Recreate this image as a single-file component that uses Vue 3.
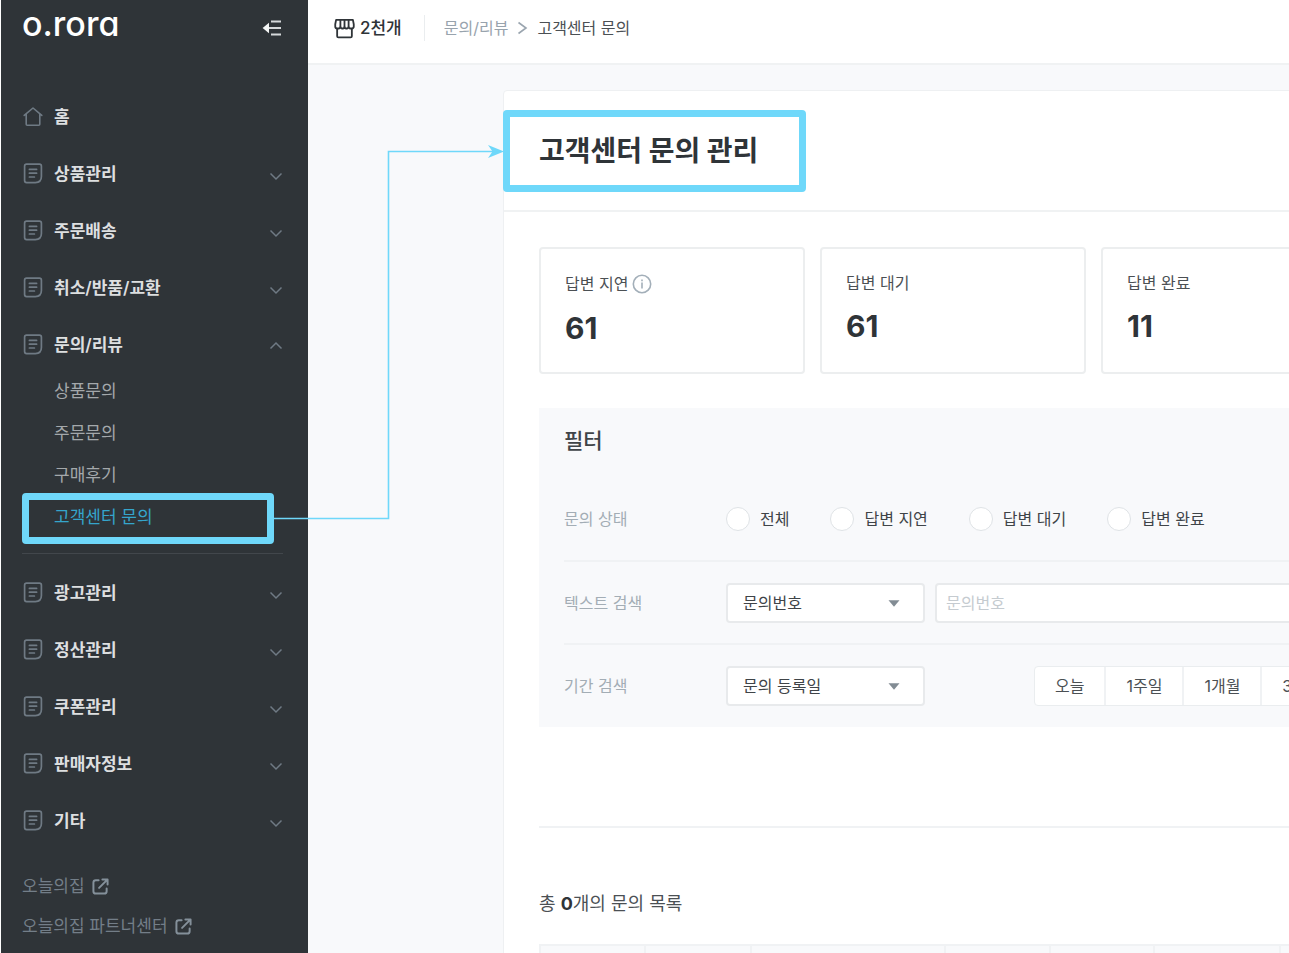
<template>
  <div class="shell">
    <aside class="sidebar">
      <div class="brand-row">
        <a href="#" class="brand">o.rora</a>
        <button type="button" class="collapse-btn" aria-label="메뉴 접기">
          <svg width="21" height="18" viewBox="0 0 21 18" fill="none" stroke="#d6d9db" stroke-width="2">
            <path d="M9 2.500h10M6 9h13M9 15.500h10" />
            <path d="M7 3.800v10.400L0.600 9z" fill="#f4f5f5" stroke="none" />
          </svg>
        </button>
      </div>

      <nav class="menu">
        <div v-for="group in menus" :key="group.label" class="group" :class="{ open: group.children }">
          <a v-if="group.home" href="#" class="group-btn">
            <svg class="group-icon" width="20" height="22" viewBox="0 0 20 22" fill="none" stroke="#6f7a84" stroke-width="1.600" stroke-linejoin="round" stroke-linecap="round">
              <path d="M1.200 9.400L10 2l8.800 7.400M3.200 8v10.200q0 1 1 1h11.600q1 0 1-1V8" />
            </svg>
            <span class="group-label">{{ group.label }}</span>
          </a>
          <button v-else type="button" class="group-btn" :aria-expanded="!!group.children">
            <svg class="group-icon" width="20" height="22" viewBox="0 0 20 22" fill="none" stroke="#6f7a84" stroke-width="1.700" stroke-linecap="round">
              <path d="M3.600 1.200h12.800q2 0 2 2v10.400q0 6-6 6H3.600q-2 0-2-2V3.200q0-2 2-2z" />
              <path d="M6.400 6.400h7.200M6.400 10.200h7.200M6.400 14h5" />
            </svg>
            <span class="group-label">{{ group.label }}</span>
            <svg class="chevron" :class="{ up: group.children }" width="14" height="9" viewBox="0 0 14 9" fill="none" stroke="#6f7a84" stroke-width="1.500">
              <path :d="group.children ? 'M1.500 7.500L7 2l5.500 5.500' : 'M1.500 1.500L7 7l5.500-5.500'" />
            </svg>
          </button>
          <ul v-if="group.children" class="sub-list">
            <li v-for="child in group.children" :key="child">
              <a href="#" :class="{ active: child === activeMenu }">{{ child }}</a>
            </li>
          </ul>
        </div>
      </nav>

      <div class="outer-links">
        <a v-for="link in outerLinks" :key="link" href="#">
          {{ link }}
          <svg width="17" height="17" viewBox="0 0 18 18" fill="none" stroke="#84909a" stroke-width="2.100" stroke-linecap="round" stroke-linejoin="round">
            <path d="M7 2.500H4q-2.500 0-2.500 2.500v9q0 2.500 2.500 2.500h9q2.500 0 2.500-2.500v-3M7.500 10.500L16 2M11 1.500h5.500V7" />
          </svg>
        </a>
      </div>
    </aside>

    <div class="content">
      <header class="topbar">
        <svg class="store-icon" width="21" height="21" viewBox="0 0 22 22" fill="none" stroke="#2f3438" stroke-width="1.900" stroke-linejoin="round">
          <path d="M2.200 2h17.600l.9 4.500V9q0 2-2 2h-1.400q-2 0-2-2 0 2-2 2h-.6q-1.700 0-1.700-2 0 2-1.700 2h-.6q-2 0-2-2 0 2-2 2H3.300q-2 0-2-2V6.500z" />
          <path d="M6.700 2v7M11 2v7M15.300 2v7M3.300 11v8q0 1.300 1.300 1.300h12.800q1.300 0 1.300-1.300v-8" />
        </svg>
        <strong class="store-name">2천개</strong>
        <span class="bar"></span>
        <nav class="crumbs">
          <a href="#">문의/리뷰</a>
          <svg width="11" height="14" viewBox="0 0 11 14" fill="none" stroke="#9aa5af" stroke-width="1.600">
            <path d="M1.500 1.500L9 7l-7.500 5.500" />
          </svg>
          <span>고객센터 문의</span>
        </nav>
      </header>

      <main class="main">
        <section class="panel">
          <div class="panel-head">
            <h1>고객센터 문의 관리</h1>
          </div>

          <div class="panel-body">
            <div class="stats">
              <div v-for="stat in stats" :key="stat.label" class="stat">
                <div class="stat-label">
                  {{ stat.label }}
                  <button v-if="stat.info" type="button" class="info-btn" aria-label="안내">
                    <svg width="20" height="20" viewBox="0 0 20 20" fill="none" stroke="#a3afb9" stroke-width="1.600">
                      <circle cx="10" cy="10" r="8.700" />
                      <path d="M10 8.500v6M10 5.500v1.700" />
                    </svg>
                  </button>
                </div>
                <div class="stat-value">{{ stat.value }}</div>
              </div>
            </div>

            <form class="filter" @submit.prevent>
              <h2>필터</h2>
              <div class="filter-row">
                <span id="status-label" class="filter-label">문의 상태</span>
                <div class="radios" role="radiogroup" aria-labelledby="status-label">
                  <label v-for="item in statuses" :key="item" class="radio">
                    <input v-model="status" type="radio" name="status" :value="item" />
                    <span>{{ item }}</span>
                  </label>
                </div>
              </div>
              <div class="filter-row">
                <label class="filter-label" for="text-type">텍스트 검색</label>
                <div class="select-box">
                  <select id="text-type">
                    <option>문의번호</option>
                  </select>
                  <svg width="12" height="7" viewBox="0 0 12 7" fill="#828c94">
                    <path d="M0.500 0.300h11L6 6.700z" />
                  </svg>
                </div>
                <input v-model="keyword" class="text-input" type="text" placeholder="문의번호" aria-label="검색어" />
              </div>
              <div class="filter-row">
                <label class="filter-label" for="date-type">기간 검색</label>
                <div class="select-box">
                  <select id="date-type">
                    <option>문의 등록일</option>
                  </select>
                  <svg width="12" height="7" viewBox="0 0 12 7" fill="#828c94">
                    <path d="M0.500 0.300h11L6 6.700z" />
                  </svg>
                </div>
                <div class="periods">
                  <button v-for="item in periods" :key="item" type="button">{{ item }}</button>
                </div>
              </div>
            </form>

            <div class="list">
              <p class="list-title">총 <b>0</b>개의 문의 목록</p>
              <table>
                <colgroup>
                  <col v-for="(width, index) in columns" :key="index" :style="{ width: width + 'px' }" />
                </colgroup>
                <thead>
                  <tr>
                    <th v-for="(width, index) in columns" :key="index"></th>
                  </tr>
                </thead>
              </table>
            </div>
          </div>
        </section>
      </main>
    </div>

    <svg class="connector" width="232" height="376" viewBox="0 0 232 376" fill="none">
      <path d="M0 373.500h114.500V6.500H224" stroke="#6fd8fa" stroke-width="1.600" />
      <path d="M230 6.500L214 0l4.500 6.500L214 13z" fill="#6fd8fa" />
    </svg>
  </div>
</template>

<script setup>
import { ref } from 'vue'

const activeMenu = ref('고객센터 문의')
const status = ref('')
const keyword = ref('')

const menus = [
  { label: '홈', home: true },
  { label: '상품관리' },
  { label: '주문배송' },
  { label: '취소/반품/교환' },
  { label: '문의/리뷰', children: ['상품문의', '주문문의', '구매후기', '고객센터 문의'] },
  { label: '광고관리' },
  { label: '정산관리' },
  { label: '쿠폰관리' },
  { label: '판매자정보' },
  { label: '기타' },
]

const outerLinks = ['오늘의집', '오늘의집 파트너센터']

const stats = [
  { label: '답변 지연', value: 61, info: true },
  { label: '답변 대기', value: 61 },
  { label: '답변 완료', value: 11 },
]

const statuses = ['전체', '답변 지연', '답변 대기', '답변 완료']
const periods = ['오늘', '1주일', '1개월', '3개월']
const columns = [105, 106, 194, 105, 104, 126, 369]
</script>

<style>
body {
  margin: 0;
  background: #fff;
}
</style>

<style scoped>
.shell {
  position: relative;
  display: flex;
  height: 100vh;
  overflow: hidden;
  font-family: Inter, 'Noto Sans CJK KR', sans-serif;
  font-size: 16px;
  line-height: 24px;
  color: #2f3438;
}

.shell * {
  box-sizing: border-box;
}

button,
input,
select {
  margin: 0;
  font: inherit;
  color: inherit;
}

button {
  padding: 0;
  border: none;
  background: none;
  cursor: pointer;
}

a {
  color: inherit;
  text-decoration: none;
}

.sidebar {
  flex: 0 0 307px;
  margin-left: 1px;
  padding: 0 25px 0 21px;
  background: #2f3438;
  font-size: 17px;
}

.brand-row {
  display: flex;
  justify-content: space-between;
  align-items: flex-start;
  height: 96px;
}

.brand {
  font-size: 34px;
  line-height: 48px;
  font-weight: 500;
  font-feature-settings: 'cv11';
  color: #fff;
}

.collapse-btn {
  display: flex;
  align-items: center;
  height: 56px;
}

.menu {
  display: flex;
  flex-direction: column;
  gap: 15px;
}

.group-btn {
  display: flex;
  align-items: center;
  width: 100%;
  height: 42px;
  text-align: left;
}

.group-icon {
  margin: 0 11px 0 1px;
}

.chevron {
  margin-top: 4px;
}

.chevron.up {
  margin-top: 0;
}

.group-label {
  flex: 1;
  font-weight: 600;
  color: #dddfe0;
}

.group.open {
  margin-bottom: 3px;
  padding-bottom: 15px;
  border-bottom: 1px solid #42474c;
}

.sub-list {
  margin: 4px 0 0;
  padding: 0;
  list-style: none;
}

.sub-list a {
  position: relative;
  display: block;
  padding-left: 32px;
  line-height: 42px;
  color: #a4a8ab;
}

.sub-list a.active {
  color: #35a5cc;
}

.sub-list a.active::after {
  content: '';
  position: absolute;
  inset: -3px 9px -6px 0;
  border: 7px solid #6fd8fa;
  border-radius: 4px;
}

.outer-links {
  display: flex;
  flex-direction: column;
  margin-top: 24px;
  color: #737e88;
}

.outer-links a {
  display: flex;
  align-items: center;
  gap: 7px;
  height: 40px;
}

.content {
  flex: 1;
  min-width: 0;
  display: flex;
  flex-direction: column;
}

.topbar {
  display: flex;
  align-items: center;
  padding: 14px 26px 21px;
  border-bottom: 2px solid #f0f2f3;
  background: #fff;
}

.store-name {
  margin-left: 5px;
  font-size: 17px;
  line-height: 28px;
  font-weight: 500;
}

.bar {
  width: 1px;
  height: 26px;
  margin: 0 19px 0 22px;
  background: #eaedef;
}

.crumbs {
  display: flex;
  align-items: center;
  gap: 9px;
  color: #4b5054;
}

.crumbs a {
  color: #98a3ad;
}

.main {
  flex: 1;
  min-height: 0;
  padding: 25px 0 0 195px;
  background: #f8f9fb;
}

.panel {
  min-width: 1181px;
  min-height: 100%;
  border: 1px solid #eef0f2;
  border-radius: 4px;
  background: #fff;
}

.panel-head {
  display: flex;
  align-items: center;
  height: 121px;
  padding-left: 35px;
  border-bottom: 2px solid #f0f2f3;
}

h1 {
  position: relative;
  margin: 0;
  font-size: 28px;
  line-height: 40px;
  font-weight: 700;
}

h1::after {
  content: '';
  position: absolute;
  inset: -21px -48px -21px -36px;
  border: 7px solid #6fd8fa;
  border-radius: 4px;
}

.panel-body {
  padding: 35px;
}

.stats {
  display: grid;
  grid-template-columns: repeat(4, 1fr);
  gap: 15px;
}

.stat {
  height: 127px;
  padding: 22px 24px;
  border: 2px solid #eceeef;
  border-radius: 4px;
}

.stat-label {
  display: flex;
  align-items: center;
  gap: 4px;
  color: #4b5054;
}

.info-btn {
  display: flex;
  align-items: center;
  height: 26px;
}

.stat-value {
  margin-top: 11px;
  font-size: 30px;
  line-height: 40px;
  font-weight: 700;
}

.filter {
  margin-top: 34px;
  padding: 18px 0 1px 25px;
  background: #f8f9fb;
}

h2 {
  margin: 0 0 21px;
  font-size: 21px;
  line-height: 30px;
  font-weight: 500;
  color: #3f4448;
}

.filter-row {
  display: flex;
  align-items: center;
  height: 83px;
}

.filter-row + .filter-row {
  border-top: 2px solid #f0f2f4;
}

.filter-label {
  width: 162px;
  color: #a3adb5;
}

.radios {
  display: flex;
  gap: 41px;
  color: #3f4448;
}

.radio {
  display: flex;
  align-items: center;
  gap: 10px;
}

.radio input {
  appearance: none;
  width: 24px;
  height: 24px;
  border: 1px solid #dfe3e6;
  border-radius: 50%;
  background: #fff;
}

.radio input:checked {
  border: 7px solid #35c5f0;
}

.select-box {
  position: relative;
  width: 199px;
  color: #3f4448;
}

.select-box select {
  appearance: none;
  width: 100%;
  height: 40px;
  padding: 0 30px 0 15px;
  border: 2px solid #e8eaec;
  border-radius: 4px;
  background: #fff;
}

.select-box svg {
  position: absolute;
  top: 17px;
  right: 25px;
  pointer-events: none;
}

.text-input {
  flex: 1;
  height: 40px;
  margin: 0 25px 0 10px;
  padding: 0 9px;
  border: 2px solid #e8eaec;
  border-radius: 4px;
  background: #fff;
}

.text-input::placeholder {
  color: #c5cbd0;
}

.periods {
  display: flex;
  margin-left: 109px;
  border: 1px solid #eaedef;
  border-radius: 4px;
  background: #fff;
  color: #4b5054;
}

.periods button {
  height: 38px;
  padding: 0 20px;
}

.periods button + button {
  border-left: 2px solid #f0f2f4;
}

.list {
  margin-top: 99px;
  padding-top: 64px;
  border-top: 2px solid #f0f2f4;
}

.list-title {
  margin: 0 0 28px;
  font-size: 18px;
  color: #4b5054;
}

.list-title b {
  color: #2f3438;
}

table {
  width: 100%;
  table-layout: fixed;
  border-collapse: collapse;
}

th {
  height: 50px;
  border: 2px solid #f0f2f4;
  background: #f8f9fb;
}

.connector {
  position: absolute;
  top: 145px;
  left: 274px;
  pointer-events: none;
}
</style>
